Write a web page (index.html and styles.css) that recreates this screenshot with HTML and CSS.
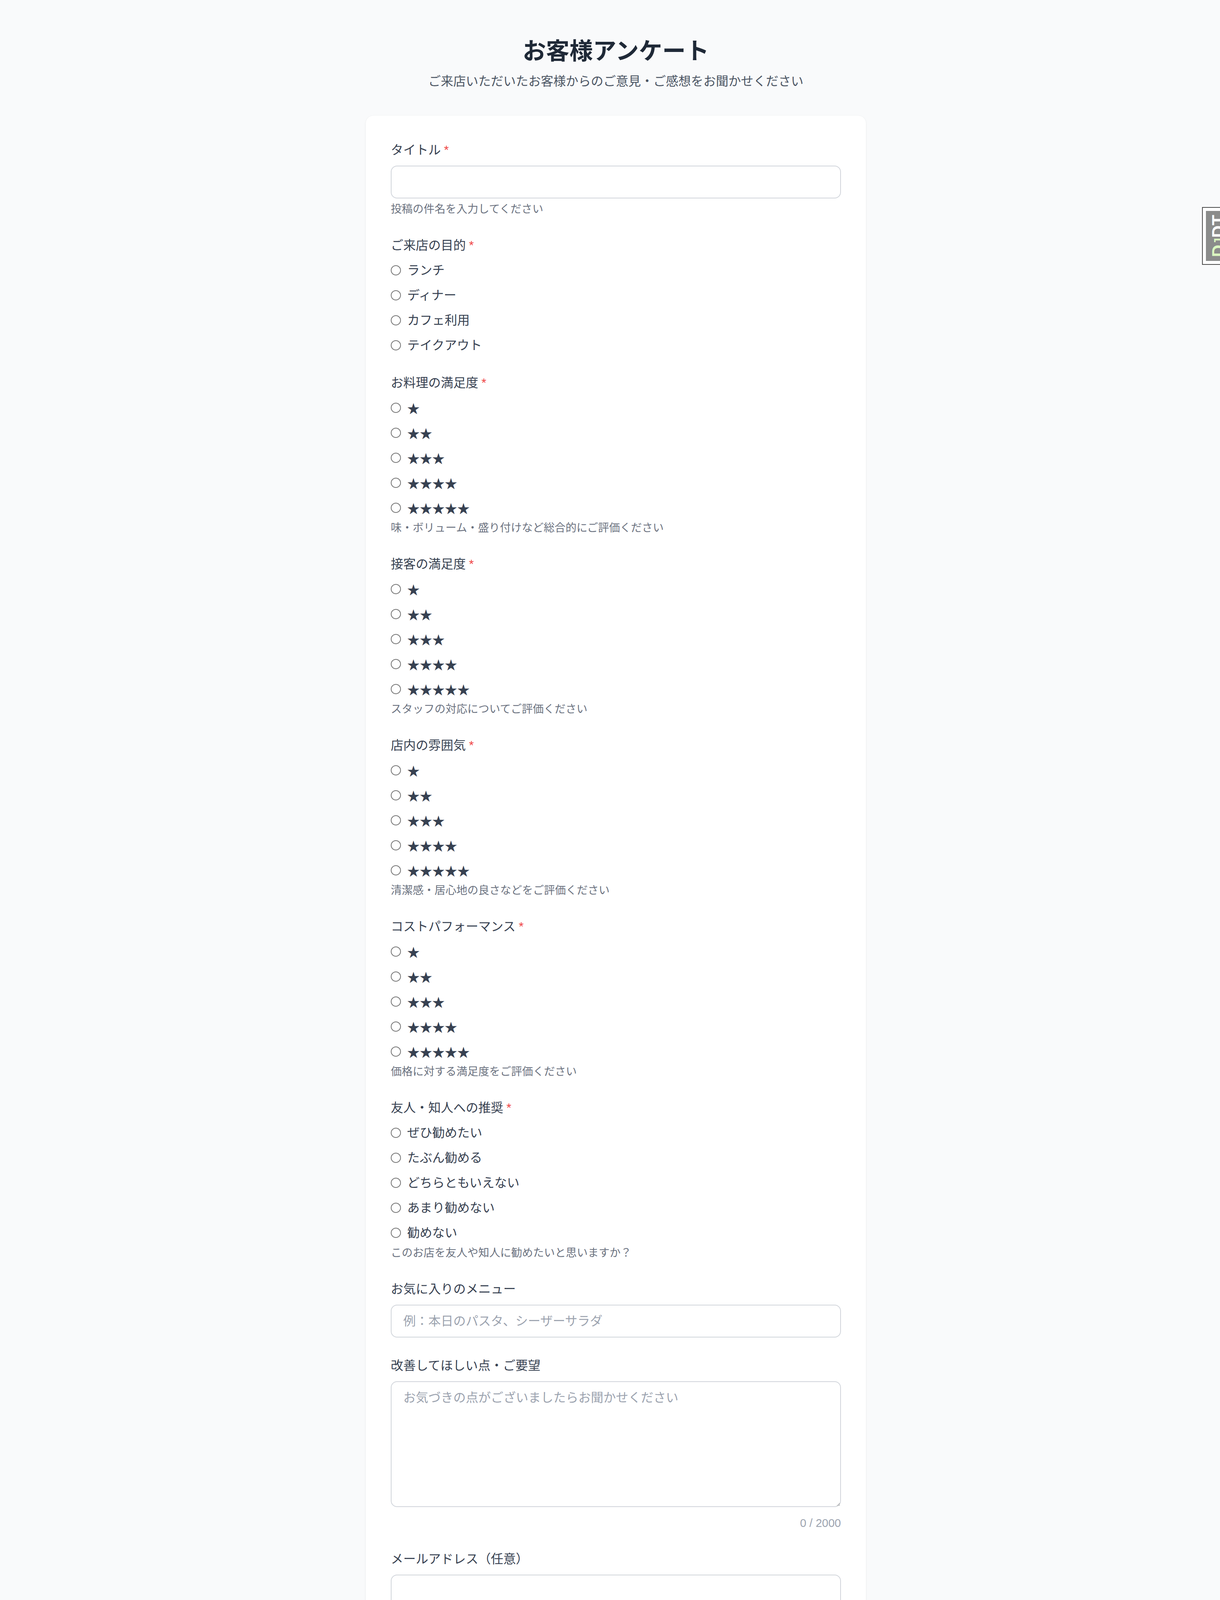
FILE: index.html
```html
<!DOCTYPE html>
<html lang="ja">
<head>
<meta charset="utf-8">
<title>お客様アンケート</title>
<link rel="stylesheet" href="styles.css">
</head>
<body>
<div class="page">
  <header class="header">
    <h1 class="title">お客様アンケート</h1>
    <p class="subtitle">ご来店いただいたお客様からのご意見・ご感想をお聞かせください</p>
  </header>

  <main class="card">
    <form class="form">
      <div class="field">
        <label class="label">タイトル<span class="req">*</span></label>
        <input class="input" type="text">
        <p class="help">投稿の件名を入力してください</p>
      </div>

      <div class="field">
        <label class="label">ご来店の目的<span class="req">*</span></label>
        <div class="options">
          <label class="option"><input class="radio" type="radio" name="q1"><span>ランチ</span></label>
          <label class="option"><input class="radio" type="radio" name="q1"><span>ディナー</span></label>
          <label class="option"><input class="radio" type="radio" name="q1"><span>カフェ利用</span></label>
          <label class="option"><input class="radio" type="radio" name="q1"><span>テイクアウト</span></label>
        </div>
      </div>

      <div class="field">
        <label class="label">お料理の満足度<span class="req">*</span></label>
        <div class="options">
          <label class="option"><input class="radio" type="radio" name="q2"><span class="stars">★</span></label>
          <label class="option"><input class="radio" type="radio" name="q2"><span class="stars">★★</span></label>
          <label class="option"><input class="radio" type="radio" name="q2"><span class="stars">★★★</span></label>
          <label class="option"><input class="radio" type="radio" name="q2"><span class="stars">★★★★</span></label>
          <label class="option"><input class="radio" type="radio" name="q2"><span class="stars">★★★★★</span></label>
        </div>
        <p class="help">味・ボリューム・盛り付けなど総合的にご評価ください</p>
      </div>

      <div class="field">
        <label class="label">接客の満足度<span class="req">*</span></label>
        <div class="options">
          <label class="option"><input class="radio" type="radio" name="q3"><span class="stars">★</span></label>
          <label class="option"><input class="radio" type="radio" name="q3"><span class="stars">★★</span></label>
          <label class="option"><input class="radio" type="radio" name="q3"><span class="stars">★★★</span></label>
          <label class="option"><input class="radio" type="radio" name="q3"><span class="stars">★★★★</span></label>
          <label class="option"><input class="radio" type="radio" name="q3"><span class="stars">★★★★★</span></label>
        </div>
        <p class="help">スタッフの対応についてご評価ください</p>
      </div>

      <div class="field">
        <label class="label">店内の雰囲気<span class="req">*</span></label>
        <div class="options">
          <label class="option"><input class="radio" type="radio" name="q4"><span class="stars">★</span></label>
          <label class="option"><input class="radio" type="radio" name="q4"><span class="stars">★★</span></label>
          <label class="option"><input class="radio" type="radio" name="q4"><span class="stars">★★★</span></label>
          <label class="option"><input class="radio" type="radio" name="q4"><span class="stars">★★★★</span></label>
          <label class="option"><input class="radio" type="radio" name="q4"><span class="stars">★★★★★</span></label>
        </div>
        <p class="help">清潔感・居心地の良さなどをご評価ください</p>
      </div>

      <div class="field">
        <label class="label">コストパフォーマンス<span class="req">*</span></label>
        <div class="options">
          <label class="option"><input class="radio" type="radio" name="q5"><span class="stars">★</span></label>
          <label class="option"><input class="radio" type="radio" name="q5"><span class="stars">★★</span></label>
          <label class="option"><input class="radio" type="radio" name="q5"><span class="stars">★★★</span></label>
          <label class="option"><input class="radio" type="radio" name="q5"><span class="stars">★★★★</span></label>
          <label class="option"><input class="radio" type="radio" name="q5"><span class="stars">★★★★★</span></label>
        </div>
        <p class="help">価格に対する満足度をご評価ください</p>
      </div>

      <div class="field">
        <label class="label">友人・知人への推奨<span class="req">*</span></label>
        <div class="options">
          <label class="option"><input class="radio" type="radio" name="q6"><span>ぜひ勧めたい</span></label>
          <label class="option"><input class="radio" type="radio" name="q6"><span>たぶん勧める</span></label>
          <label class="option"><input class="radio" type="radio" name="q6"><span>どちらともいえない</span></label>
          <label class="option"><input class="radio" type="radio" name="q6"><span>あまり勧めない</span></label>
          <label class="option"><input class="radio" type="radio" name="q6"><span>勧めない</span></label>
        </div>
        <p class="help">このお店を友人や知人に勧めたいと思いますか？</p>
      </div>

      <div class="field">
        <label class="label">お気に入りのメニュー</label>
        <input class="input" type="text" placeholder="例：本日のパスタ、シーザーサラダ">
      </div>

      <div class="field">
        <label class="label">改善してほしい点・ご要望</label>
        <textarea class="textarea" placeholder="お気づきの点がございましたらお聞かせください"></textarea>
        <p class="counter">0 / 2000</p>
      </div>

      <div class="field">
        <label class="label">メールアドレス（任意）</label>
        <input class="input" type="email">
        <p class="help">入力すると返信通知を受け取れます。未入力でも確認コードで返信を確認できます。</p>
      </div>

      <div class="submit-area">
        <button class="submit" type="button">送信する</button>
        <p class="privacy">投稿することで<a class="link" href="#">プライバシーポリシー</a>に同意したものとみなされます。</p>
      </div>
    </form>

    <div class="notice">
      <h2 class="notice-title">ご注意</h2>
      <ul class="notice-list">
        <li>・投稿内容は匿名で届けられます（メールアドレスは管理者に表示されません）</li>
        <li>・投稿後に確認IDが発行されます（返信確認に必要）</li>
        <li>・確認IDは再発行できませんので、必ず控えてください</li>
        <li>・返信があった際はメールでお知らせします</li>
        <li>・誹謗中傷や不適切な内容の投稿はお控えください</li>
      </ul>
    </div>
  </main>

  <footer class="footer">
    <a class="footer-link" href="#">返信を確認する</a>
    <p class="powered">Powered by ホンネ箱</p>
  </footer>
</div>

<div class="djdt-handle">
  <div class="djdt-btn"><span class="djdt-text"><span class="dj-d">D</span><span class="dj-j">J</span>DT</span></div>
</div>
</body>
</html>
```

FILE: styles.css
```css
* {
  box-sizing: border-box;
}

html, body {
  margin: 0;
  padding: 0;
}

html {
  overflow-x: hidden;
}

body {
  background: #f9fafb;
  font-family: "Liberation Sans", "Noto Sans CJK JP", sans-serif;
  color: #374151;
}

.page {
  padding: 96px 0 72px 30px;
}

.header {
  text-align: center;
}

.title {
  margin: 0;
  font-size: 60px;
  line-height: 72px;
  font-weight: 700;
  color: #1f2937;
}

.subtitle {
  margin: 16px 0 0;
  font-size: 32px;
  line-height: 48px;
  color: #4b5563;
}

.card {
  width: 1280px;
  margin: 64px auto 0;
  padding: 64px;
  background: #ffffff;
  border-radius: 20px;
  box-shadow: 0 2px 5px rgba(0, 0, 0, 0.06), 0 0 2px rgba(0, 0, 0, 0.05);
}

.form {
  display: flex;
  flex-direction: column;
  gap: 48px;
  margin: 0;
}

.field {
  display: flex;
  flex-direction: column;
}

.label {
  display: block;
  height: 48px;
  margin-bottom: 16px;
  font-size: 32px;
  line-height: 48px;
  font-weight: 400;
  color: #374151;
}

.req {
  margin-left: 8px;
  color: #ef4444;
}

.input,
.textarea {
  display: block;
  width: 100%;
  margin: 0;
  padding: 16px 30px;
  font-family: inherit;
  font-size: 32px;
  line-height: 48px;
  color: #111827;
  background: #ffffff;
  border: 2px solid #d1d5db;
  border-radius: 16px;
  outline: none;
}

.input {
  height: 84px;
}

.textarea {
  height: 322px;
  resize: vertical;
}

.input::placeholder,
.textarea::placeholder {
  color: #9ca3af;
}

.help {
  margin: 8px 0 0;
  font-size: 28px;
  line-height: 40px;
  color: #6b7280;
}

.counter {
  margin: 21px 0 0;
  text-align: right;
  font-size: 29px;
  line-height: 40px;
  color: #9ca3af;
}

.options {
  display: flex;
  flex-direction: column;
  gap: 16px;
}

.option {
  display: flex;
  align-items: center;
  gap: 16px;
  height: 48px;
  font-size: 32px;
  line-height: 48px;
  color: #374151;
}

.radio {
  appearance: none;
  -webkit-appearance: none;
  flex: none;
  width: 26px;
  height: 26px;
  margin: 0;
  border: 2px solid #767676;
  border-radius: 50%;
  background: #ffffff;
}

.stars {
  font-family: "Noto Sans CJK JP", sans-serif;
  color: #374151;
}

.submit-area {
  display: flex;
  flex-direction: column;
}

.submit {
  display: block;
  width: 100%;
  height: 96px;
  margin: 0;
  border: 0;
  border-radius: 16px;
  background: #1a6619;
  color: #ffffff;
  font-family: inherit;
  font-size: 32px;
  line-height: 48px;
  font-weight: 700;
}

.privacy {
  height: 32px;
  margin: 16px 0 0;
  text-align: center;
  font-size: 24px;
  line-height: 32px;
  color: #6b7280;
}

.link {
  color: #2563eb;
  text-decoration: none;
}

.notice {
  margin-top: 64px;
  padding: 32px;
  background: #fefbe8;
  border: 2px solid #fce98c;
  border-radius: 16px;
}

.notice-title {
  margin: 0 0 18px;
  font-size: 29px;
  line-height: 44px;
  font-weight: 500;
  color: #854d0e;
}

.notice-list {
  margin: 0;
  padding: 0;
  list-style: none;
  display: flex;
  flex-direction: column;
  gap: 8px;
  font-size: 28px;
  line-height: 40px;
  color: #a16207;
}

.notice-list li {
  height: 40px;
}

.footer {
  display: flex;
  flex-direction: column;
  align-items: center;
  margin-top: 48px;
}

.footer-link {
  font-size: 28px;
  line-height: 40px;
  color: #2563eb;
  text-decoration: none;
}

.powered {
  height: 40px;
  margin: 70px 0 0;
  font-size: 28px;
  line-height: 40px;
  color: #9ca3af;
}

/* debug toolbar handle, partly outside the viewport */
.djdt-handle {
  position: fixed;
  top: 530px;
  left: 3076px;
  width: 74px;
  padding: 8px 0 8px 8px;
  background: #ffffff;
  border: 2px solid #4b4b4b;
  border-right: 0;
}

.djdt-btn {
  display: flex;
  padding: 10px 0;
  background: #8b8c8b;
}

.djdt-text {
  writing-mode: vertical-rl;
  transform: rotate(180deg);
  font-family: "Liberation Sans", sans-serif;
  font-weight: 700;
  font-size: 44px;
  line-height: 64px;
  color: #ffffff;
}

.dj-d,
.dj-j {
  color: #dbf7c0;
}

.dj-j {
  font-size: 32px;
}
```
